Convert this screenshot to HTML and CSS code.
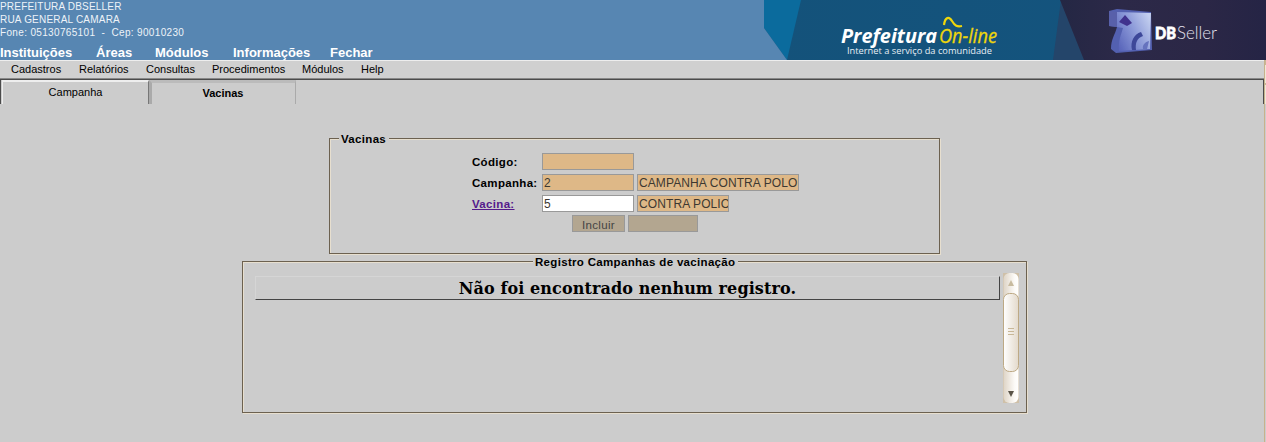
FILE: index.html
```html
<!DOCTYPE html>
<html lang="pt-BR">
<head>
<meta charset="utf-8">
<title>DBSeller - Prefeitura On-line</title>
<link rel="stylesheet" href="styles.css">
</head>
<body>
<header class="top">
  <div class="top-left">
    <div class="org"><div>PREFEITURA DBSELLER</div><div>RUA GENERAL CAMARA</div><div class="phone">Fone: 05130765101 &nbsp;-&nbsp; Cep: 90010230</div></div>
    <nav class="main-nav"><a class="n1">Instituições</a><a class="n2">Áreas</a><a class="n3">Módulos</a><a class="n4">Informações</a><a>Fechar</a></nav>
  </div>
  <svg class="banner" width="502" height="60" viewBox="0 0 502 60">
    <defs>
      <linearGradient id="sea" x1="0" x2="1"><stop offset="0" stop-color="#14527a"/><stop offset=".75" stop-color="#14547e"/><stop offset="1" stop-color="#12587f"/></linearGradient>
      <linearGradient id="night" x1="0" x2="1"><stop offset="0" stop-color="#242744"/><stop offset=".3" stop-color="#2c2948"/><stop offset=".7" stop-color="#2b2746"/><stop offset="1" stop-color="#252445"/></linearGradient>
      <linearGradient id="face" x1="0" y1=".8" x2="1" y2=".2"><stop offset="0" stop-color="#5a66bb"/><stop offset=".5" stop-color="#8b99d8"/><stop offset="1" stop-color="#c3cfef"/></linearGradient>
      <filter id="soft"><feGaussianBlur stdDeviation=".45"/></filter>
    </defs>
    <rect width="502" height="60" fill="url(#sea)"/>
    <path d="M0 0H37L23 60L0 28Z" fill="#0b6b9d"/>
    <path d="M0 28L23 60H0Z" fill="#5786b2"/>
    <path d="M297 0L289 60H330V0Z" fill="#24456a"/>
    <path d="M296 0H502V60H320Z" fill="url(#night)"/>
    <text x="77" y="43" class="brand" textLength="96" lengthAdjust="spacingAndGlyphs">Prefeitura</text>
    <text x="175" y="43" class="online" textLength="58" lengthAdjust="spacingAndGlyphs">On-line</text>
    <path d="M180 25C181 17 185 16 188 21C191 26 193 27 198 26" fill="none" stroke="#efd60b" stroke-width="2.2"/>
    <text x="83" y="54" class="slogan" textLength="145" lengthAdjust="spacingAndGlyphs">Internet a serviço da comunidade</text>
    <g filter="url(#soft)">
      <path d="M345 11L353 9L387 12L388 50L352 53L347 49C347 39 351 35 353 27L345 26Z" fill="#5360b0"/>
      <path d="M353 12L387 13L386 49L355 51C354 41 357 35 359 28L353 27Z" fill="url(#face)"/>
      <path d="M345 11L353 12V27L345 26Z" fill="#5960aa"/>
      <path d="M355 22L361 15L368 23L363 26Z" fill="#40308d"/>
      <path d="M368 50C366 42 370 34 377 32L379 36C373 38 371 43 372 50Z" fill="#3c4799"/>
      <path d="M379 49C378 45 381 42 385 41L383 49Z" fill="#6673be"/>
    </g>
    <text x="391" y="39" class="db" textLength="21" lengthAdjust="spacingAndGlyphs">DB</text>
    <text x="413" y="39" class="seller" textLength="40" lengthAdjust="spacingAndGlyphs">Seller</text>
  </svg>
</header>
<div class="page">
  <div class="content">
    <nav class="menu"><a class="m1">Cadastros</a><a class="m2">Relatórios</a><a class="m3">Consultas</a><a class="m4">Procedimentos</a><a class="m5">Módulos</a><a>Help</a></nav>
    <div class="tabs"><div class="tab">Campanha</div><div class="tab active">Vacinas</div></div>
    <section class="box form-box">
      <div class="legend">Vacinas</div>
      <div class="row"><label>Código:</label><div class="field"></div></div>
      <div class="row"><label>Campanha:</label><div class="field">2</div><div class="field wide">CAMPANHA CONTRA POLO</div></div>
      <div class="row"><label><a class="link">Vacina:</a></label><div class="field white">5</div><div class="field">CONTRA POLIO</div></div>
      <div class="buttons"><div class="btn">Incluir</div><div class="btn disabled"></div></div>
    </section>
    <section class="box list-box">
      <div class="legend center">Registro Campanhas de vacinação</div>
      <div class="message">Não foi encontrado nenhum registro.</div>
      <svg class="scroll" width="16" height="131" viewBox="0 0 16 131">
        <defs><linearGradient id="track" x1="0" x2="1"><stop offset="0" stop-color="#ded4c6"/><stop offset=".75" stop-color="#fdfbf8"/><stop offset="1" stop-color="#fff"/></linearGradient>
        <linearGradient id="thumb" x1="0" x2="1"><stop offset="0" stop-color="#fff"/><stop offset="1" stop-color="#e3d9cb"/></linearGradient></defs>
        <rect width="16" height="130" fill="#cfc0a8"/>
        <rect x=".5" width="15" height="130" rx="6" fill="url(#track)"/>
        <rect x=".5" y="20.5" width="15" height="78" rx="6" fill="url(#thumb)" stroke="#bda985"/>
        <path d="M5 13H11L8 7Z" fill="#c8bb9f"/>
        <path d="M5 55.5H11M5 58.5H11M5 61.5H11" stroke="#c8b797"/>
        <path d="M5 118H11L8 124Z" fill="#5a5448"/>
      </svg>
    </section>
  </div>
  <div class="edge"></div>
</div>
</body>
</html>
```
FILE: styles.css
```css
* { box-sizing: border-box; }
body { margin: 0; width: 1266px; height: 442px; overflow: hidden; background: #ccc; font-family: "Liberation Sans", Arial, sans-serif; font-size: 11px; color: #000; }
.top { display: flex; height: 60px; background: #5786b2; }
.top-left { width: 764px; color: #fff; white-space: nowrap; }
.org { height: 45px; font-size: 10px; line-height: 13px; letter-spacing: .2px; color: #eef3f8; }
.phone { font-size: 10px; letter-spacing: .34px; }
.main-nav { display: flex; font-size: 13px; font-weight: bold; line-height: 15px; }
.n1 { width: 96px; }
.n2 { width: 59px; }
.n3 { width: 78px; }
.n4 { width: 97px; }
.banner { display: block; flex: none; }
.brand { font: italic bold 20px "Open Sans", sans-serif; fill: #fff; }
.online { font: italic 20px "Open Sans", sans-serif; fill: #efd60b; stroke: #efd60b; stroke-width: .3px; }
.slogan { font: 9.5px "Open Sans", sans-serif; fill: #e7eef4; }
.db { font: 900 17px Lato, sans-serif; fill: #fff; stroke: #fff; stroke-width: .8px; }
.seller { font: 300 18px Lato, sans-serif; fill: #e2e1ed; }
.page { display: flex; height: 382px; }
.content { width: 1264px; }
.edge { width: 2px; background: linear-gradient(#c8b594 0 5px, #f0e7d8 5px 23px, #c8b594 23px 25px, #f0e7d8 25px 44px, #ccc 44px); border-left: 1px solid #c7b28c; }
.menu { display: flex; height: 19px; padding-left: 11px; line-height: 16px; border-top: 1px solid #eee; border-bottom: 1px solid #888; background: #d0d0d0; }
.m1 { width: 68px; }
.m2 { width: 67px; }
.m3 { width: 66px; }
.m4 { width: 90px; }
.m5 { width: 59px; }
.tabs { display: flex; height: 25px; padding-left: 1px; border: solid #4b4b4b; border-width: 1px 1px 0; }
.tab { width: 147px; border: solid; border-width: 2px 1px 0 1px; border-color: #eee #777 #777 #eee; line-height: 20px; text-align: center; }
.tab.active { width: 147px; padding-right: 1px; border-width: 3px 1px 0 3px; border-color: #bbb #aaa #aaa #aaa; font-weight: bold; }
.box { position: relative; border: 1px solid #6c6150; box-shadow: 1px 1px 0 #e7dfcf, inset 1px 1px 0 #e7dfcf; }
.form-box { width: 611px; height: 116px; margin: 34px 0 0 329px; padding: 14px 0 0 142px; }
.legend { position: absolute; left: 9px; top: -7px; padding: 0 3px 0 2px; line-height: 15px; background: #ccc; font-size: 11.5px; font-weight: bold; letter-spacing: .32px; white-space: nowrap; }
.legend.center { left: 290px; }
.row { display: flex; height: 17px; margin-bottom: 4px; }
.row label { width: 70px; line-height: 18px; font-size: 11.5px; font-weight: bold; letter-spacing: .32px; }
.link { color: #551a8b; text-decoration: underline; }
.field { width: 92px; height: 17px; margin-right: 3px; padding-left: 1px; overflow: hidden; border: 1px solid #999; background: #deb887; color: #3d3831; font-size: 12px; letter-spacing: .1px; line-height: 16px; white-space: nowrap; }
.field.wide { width: 162px; }
.field.white { background: #fff; }
.buttons { display: flex; gap: 3px; margin: -1px 0 0 100px; }
.btn { width: 53px; height: 17px; border: 1px solid #999; background: #b3a690; color: #444; font-size: 11.5px; letter-spacing: .3px; line-height: 18px; text-align: center; }
.btn.disabled { width: 70px; }
.list-box { display: flex; width: 785px; height: 152px; margin: 7px 0 0 242px; padding: 11px 0 0 12px; }
.message { width: 745px; height: 24px; margin: 3px 3px 0 0; border: 1px solid; border-color: #d5d5d5 #444 #444 #d5d5d5; font: bold 16px/24px "DejaVu Serif", serif; letter-spacing: .1px; text-align: center; }
.scroll { display: block; flex: none; }
```
